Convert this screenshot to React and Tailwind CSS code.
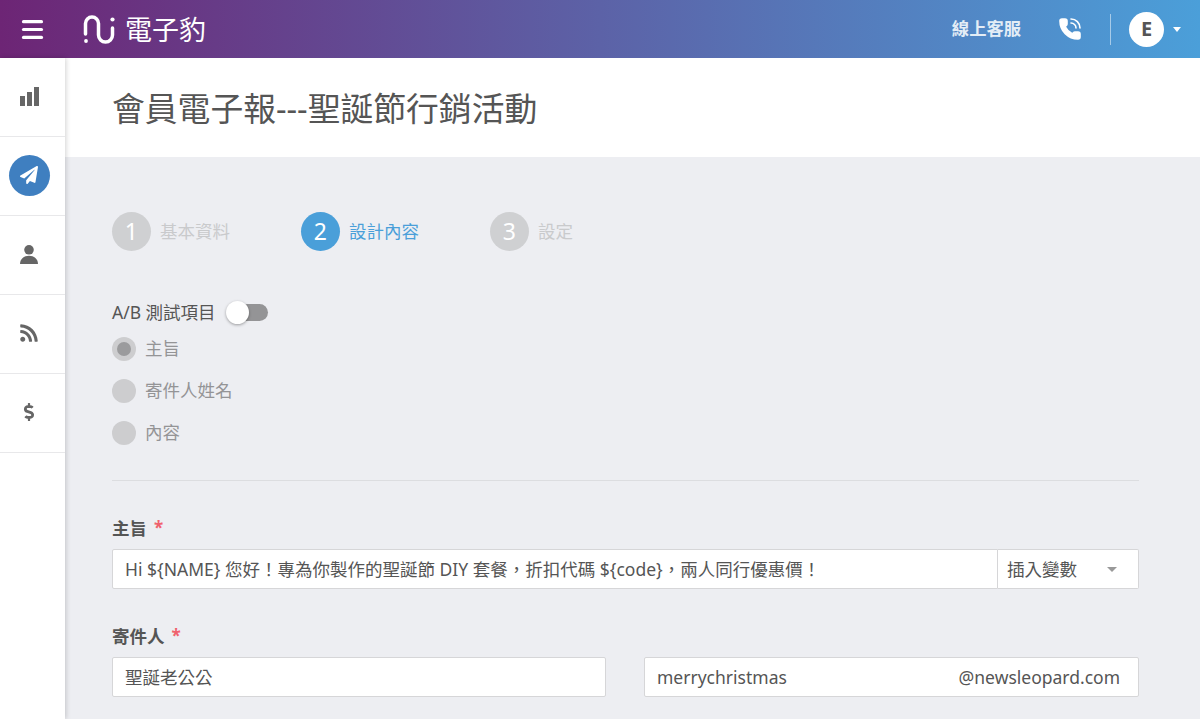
import { Menu } from 'lucide-react';
import { FaPaperPlane, FaRss, FaDollarSign } from 'react-icons/fa';

const font = "font-['Noto_Sans','Noto_Sans_CJK_TC',sans-serif]";

function NavItem({ children }) {
  return <div className="h-[79px] flex items-center justify-center pr-[7px] pb-[2px] border-b border-[#e8e8ea] text-[#666]">{children}</div>;
}

function Step({ n, label, active }) {
  return (
    <div className="w-[189px] flex items-center gap-[9.5px]">
      <div className={`w-[38.5px] h-[38.5px] rounded-full flex items-center justify-center text-[23px] text-white ${active ? 'bg-[#4a9fd9]' : 'bg-[#cfd0d2]'}`}>{n}</div>
      <span className={`text-[17.5px] ${active ? 'text-[#4a9fd9]' : 'text-[#c9cacc]'}`}>{label}</span>
    </div>
  );
}

function Radio({ label, checked }) {
  return (
    <div className="h-[42px] flex items-center gap-[9px]">
      <div className="w-[24px] h-[24px] rounded-full bg-[#cdcdcf] flex items-center justify-center">
        {checked && <div className="w-[14px] h-[14px] rounded-full bg-[#9b9b9d]" />}
      </div>
      <span className="text-[17.5px] text-[#949496]">{label}</span>
    </div>
  );
}

function FieldLabel({ children }) {
  return (
    <div className="h-[21px] flex items-center gap-[7px] text-[17.5px] font-bold text-[#555]">
      {children}
      <span className="text-[#f0616d] text-[17px] font-bold">*</span>
    </div>
  );
}

export default function App() {
  return (
    <div className={`w-[1200px] h-[719px] overflow-hidden flex flex-col bg-[#edeef2] ${font}`}>
      <header className="h-[58px] shrink-0 flex items-center bg-linear-to-r/srgb from-[#6d2575] to-[#4b9fd9] text-white">
        <div className="w-[64px] flex justify-center">
          <Menu className="w-[27px] h-[27px]" strokeWidth={2.8} />
        </div>
        <div className="ml-[19px] flex items-center gap-[10px]">
          <svg width="32" height="30" viewBox="0 0 32 30" fill="none" stroke="white" strokeWidth="3.5" strokeLinecap="round">
            <path d="M2.5 20V9.5a6.5 6.5 0 0 1 13 0V21a7 7 0 0 0 14 0V14" />
            <circle cx="3" cy="27" r="1.9" fill="white" stroke="none" />
            <circle cx="29.5" cy="5.5" r="2.1" fill="white" stroke="none" />
          </svg>
          <span className="text-[27px] leading-none">電子豹</span>
        </div>
        <div className="ml-auto flex items-center">
          <span className="text-[17.3px] font-bold text-[#e3edf6]">線上客服</span>
          <svg className="ml-[37px]" width="24" height="24" viewBox="0 0 24 24" fill="none" stroke="white" strokeWidth="1.6" strokeLinecap="round" strokeLinejoin="round">
            <path fill="white" d="M13.832 16.568a1 1 0 0 0 1.213-.303l.355-.465A2 2 0 0 1 17 15h3a2 2 0 0 1 2 2v3a2 2 0 0 1-2 2A18 18 0 0 1 2 4a2 2 0 0 1 2-2h3a2 2 0 0 1 2 2v3a2 2 0 0 1-.8 1.6l-.468.351a1 1 0 0 0-.292 1.233 14 14 0 0 0 6.392 6.384" />
            <path d="M13 2a9 9 0 0 1 9 9" />
            <path d="M13 6a5 5 0 0 1 5 5" />
          </svg>
          <div className="ml-[28px] w-px h-[31px] bg-white/50" />
          <div className="ml-[18px] w-[35px] h-[35px] rounded-full bg-white flex items-center justify-center text-[20px] font-bold text-[#555]">E</div>
          <div className="ml-[9px] mr-[19px] w-0 h-0 border-x-[4px] border-x-transparent border-t-[5px] border-t-white" />
        </div>
      </header>

      <div className="flex flex-1 min-h-0">
        <aside className="w-[65px] shrink-0 bg-white shadow-[1px_0_5px_rgba(0,0,0,0.18)] z-10">
          <NavItem>
            <svg width="19" height="19" viewBox="0 0 19 19" fill="currentColor">
              <rect x="0" y="9" width="5" height="10" />
              <rect x="7" y="5" width="5" height="14" />
              <rect x="14" y="0" width="5" height="19" />
            </svg>
          </NavItem>
          <NavItem>
            <div className="w-[41px] h-[41px] rounded-full bg-[#3f7fc0] flex items-center justify-center">
              <FaPaperPlane className="w-[18px] h-[18px] text-white" />
            </div>
          </NavItem>
          <NavItem>
            <svg width="18" height="19" viewBox="0 0 18 19" fill="currentColor">
              <circle cx="9" cy="4.8" r="4.8" />
              <path d="M0 19c0-5 4-8.2 9-8.2s9 3.2 9 8.2z" />
            </svg>
          </NavItem>
          <NavItem><FaRss className="w-[20px] h-[20px]" /></NavItem>
          <NavItem><FaDollarSign className="w-[18px] h-[18px]" /></NavItem>
        </aside>

        <main className="flex-1 min-w-0">
          <div className="h-[99px] bg-white flex items-center pl-[47px] pt-[2px]">
            <h1 className="text-[32.8px] font-normal text-[#555]">會員電子報---聖誕節行銷活動</h1>
          </div>

          <div className="pl-[47px] pr-[61px] pt-[55px]">
            <div className="flex">
              <Step n="1" label="基本資料" />
              <Step n="2" label="設計內容" active />
              <Step n="3" label="設定" />
            </div>

            <div className="mt-[51px] h-[22px] flex items-center text-[17.5px] text-[#555]">
              A/B 測試項目
              <div className="relative ml-[11px] w-[41px] h-[17px] rounded-full bg-[#949496]">
                <div className="absolute left-[-1px] top-[-3px] w-[23px] h-[23px] rounded-full bg-white shadow-[0_1px_3px_rgba(0,0,0,0.35)]" />
              </div>
            </div>

            <div className="mt-[4px]">
              <Radio label="主旨" checked />
              <Radio label="寄件人姓名" />
              <Radio label="內容" />
            </div>

            <div className="mt-[26px] border-t border-[#dcdde0]" />

            <div className="mt-[37px]">
              <FieldLabel>主旨</FieldLabel>
              <div className="mt-[10px] h-[40px] flex text-[17.5px] text-[#555]">
                <div className="w-[886px] bg-white border border-[#d6d6d8] rounded-l-[2px] flex items-center px-[12px] pt-[2px] whitespace-nowrap">
                  Hi ${'{'}NAME{'}'} 您好！專為你製作的聖誕節 DIY 套餐，折扣代碼 ${'{'}code{'}'}，兩人同行優惠價！
                </div>
                <div className="flex-1 bg-white border border-l-0 border-[#d6d6d8] rounded-r-[2px] flex items-center justify-between pl-[9px] pr-[21px] pt-[2px]">
                  插入變數
                  <div className="w-0 h-0 border-x-[5px] border-x-transparent border-t-[5px] border-t-[#999]" />
                </div>
              </div>
            </div>

            <div className="mt-[37px]">
              <FieldLabel>寄件人</FieldLabel>
              <div className="mt-[10px] flex gap-[38px] text-[17.5px] text-[#555]">
                <div className="w-[494px] h-[40px] bg-white border border-[#d6d6d8] rounded-[2px] flex items-center px-[12px] pt-[2px]">聖誕老公公</div>
                <div className="flex-1 h-[40px] bg-white border border-[#d6d6d8] rounded-[2px] flex items-center justify-between pl-[12px] pr-[18px] pt-[2px]">
                  <span>merrychristmas</span>
                  <span>@newsleopard.com</span>
                </div>
              </div>
            </div>
          </div>
        </main>
      </div>
    </div>
  );
}
